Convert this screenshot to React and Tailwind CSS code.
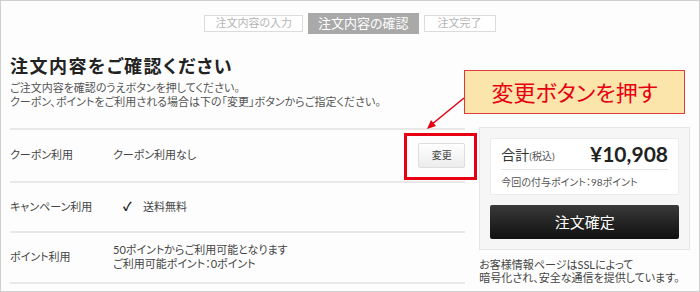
import React from 'react';

const steps = [
  { label: '注文内容の入力', active: false, pad: 'px-[10px]' },
  { label: '注文内容の確認', active: true, pad: 'px-[10px]' },
  { label: '注文完了', active: false, pad: 'px-[13px]' },
];

const Step = ({ label, active, pad }) =>
  active ? (
    <div className={`h-[21px] ${pad} flex items-center bg-[#a9a9a9] text-white text-[13px]`}>{label}</div>
  ) : (
    <div className={`h-[17px] ${pad} flex items-center bg-white border border-[#dcdcdc] text-[#b5b5b5] text-[11px]`}>{label}</div>
  );

const Row = ({ label, children, h }) => (
  <div className={`flex items-center border-t-2 border-[#e8e8e8] ${h}`}>
    <div className="w-[103px] shrink-0 text-[11px] text-[#444]">{label}</div>
    {children}
  </div>
);

export default function App() {
  return (
    <div className="relative w-[700px] h-[292px] overflow-hidden border border-[#cfcfcf] bg-[#fdfdfd] font-[Lato,'Noto_Sans_CJK_JP',sans-serif] [font-feature-settings:'palt'] text-[#333]">
      {/* step indicator */}
      <div className="flex justify-center items-center gap-[5px] pt-[12px]">
        {steps.map((s) => (
          <Step key={s.label} {...s} />
        ))}
      </div>

      <div className="px-[9px]">
        <h1 className="mt-[20px] text-[18px] leading-[24px] font-bold text-[#222] tracking-[1.5px]">注文内容をご確認ください</h1>
        <p className="mt-[3px] text-[11px] leading-[14px] text-[#555]">
          ご注文内容を確認のうえボタンを押してください。
          <br />
          クーポン、ポイントをご利用される場合は下の「変更」ボタンからご指定ください。
        </p>

        <div className="flex mt-[19px]">
          {/* order options */}
          <div className="w-[456px] border-b-2 border-[#e8e8e8]">
            <Row label="クーポン利用" h="h-[53px]">
              <div className="flex-1 text-[11px] text-[#444]">クーポン利用なし</div>
              <button className="w-[47px] h-[25px] text-[10px] text-[#444] border border-[#dedede] rounded-[2px] bg-gradient-to-b from-white to-[#ececec]">変更</button>
            </Row>
            <Row label="キャンペーン利用" h="h-[50px]">
              <div className="flex items-center text-[11px] text-[#444]">
                <span className="ml-[10px] w-[20px] text-[12px] font-bold text-[#111]">✓</span>
                送料無料
              </div>
            </Row>
            <Row label="ポイント利用" h="h-[50px]">
              <div className="text-[11px] leading-[14px] text-[#444]">
                50ポイントからご利用可能となります
                <br />
                ご利用可能ポイント：0ポイント
              </div>
            </Row>
          </div>

          {/* summary */}
          <div className="ml-[14px] w-[211px] -mt-[1px]">
            <div className="border border-[#e6e6e6] bg-[#f6f6f6] p-[10px]">
              <div className="bg-white border border-[#ececec] px-[10px]">
                <div className="flex items-center justify-between h-[31px] border-b border-[#e6e6e6]">
                  <div className="text-[14px] text-[#333]">
                    合計<span className="text-[10px] text-[#555]">(税込)</span>
                  </div>
                  <div className="text-[21px] font-bold text-[#222]">¥10,908</div>
                </div>
                <div className="h-[24px] flex items-center text-[10px] text-[#555]">今回の付与ポイント：98ポイント</div>
              </div>
              <button className="mt-[10px] w-full h-[34px] rounded-[2px] bg-gradient-to-b from-[#3a3a3a] to-[#111] text-white text-[15px]">注文確定</button>
            </div>
            <p className="mt-[8px] text-[11px] leading-[13px] text-[#444]">
              お客様情報ページはSSLによって
              <br />
              暗号化され、安全な通信を提供しています。
            </p>
          </div>
        </div>
      </div>

      {/* annotation */}
      <div className="absolute left-[403px] top-[132px] w-[73px] h-[47px] border-[3px] border-[#e60012]" />
      <div className="absolute left-[463px] top-[69px] w-[221px] h-[44px] flex items-center justify-center bg-[#fce5aa] border border-[#e23a3a] text-[22px] text-[#e60012]">
        変更ボタンを押す
      </div>
      <svg className="absolute left-[420px] top-[92px]" width="48" height="40" viewBox="0 0 48 40">
        <line x1="43" y1="5" x2="10" y2="32" stroke="#e60012" strokeWidth="1.5" />
        <polygon points="6,36 10,27 15,33" fill="#e60012" />
      </svg>
    </div>
  );
}
